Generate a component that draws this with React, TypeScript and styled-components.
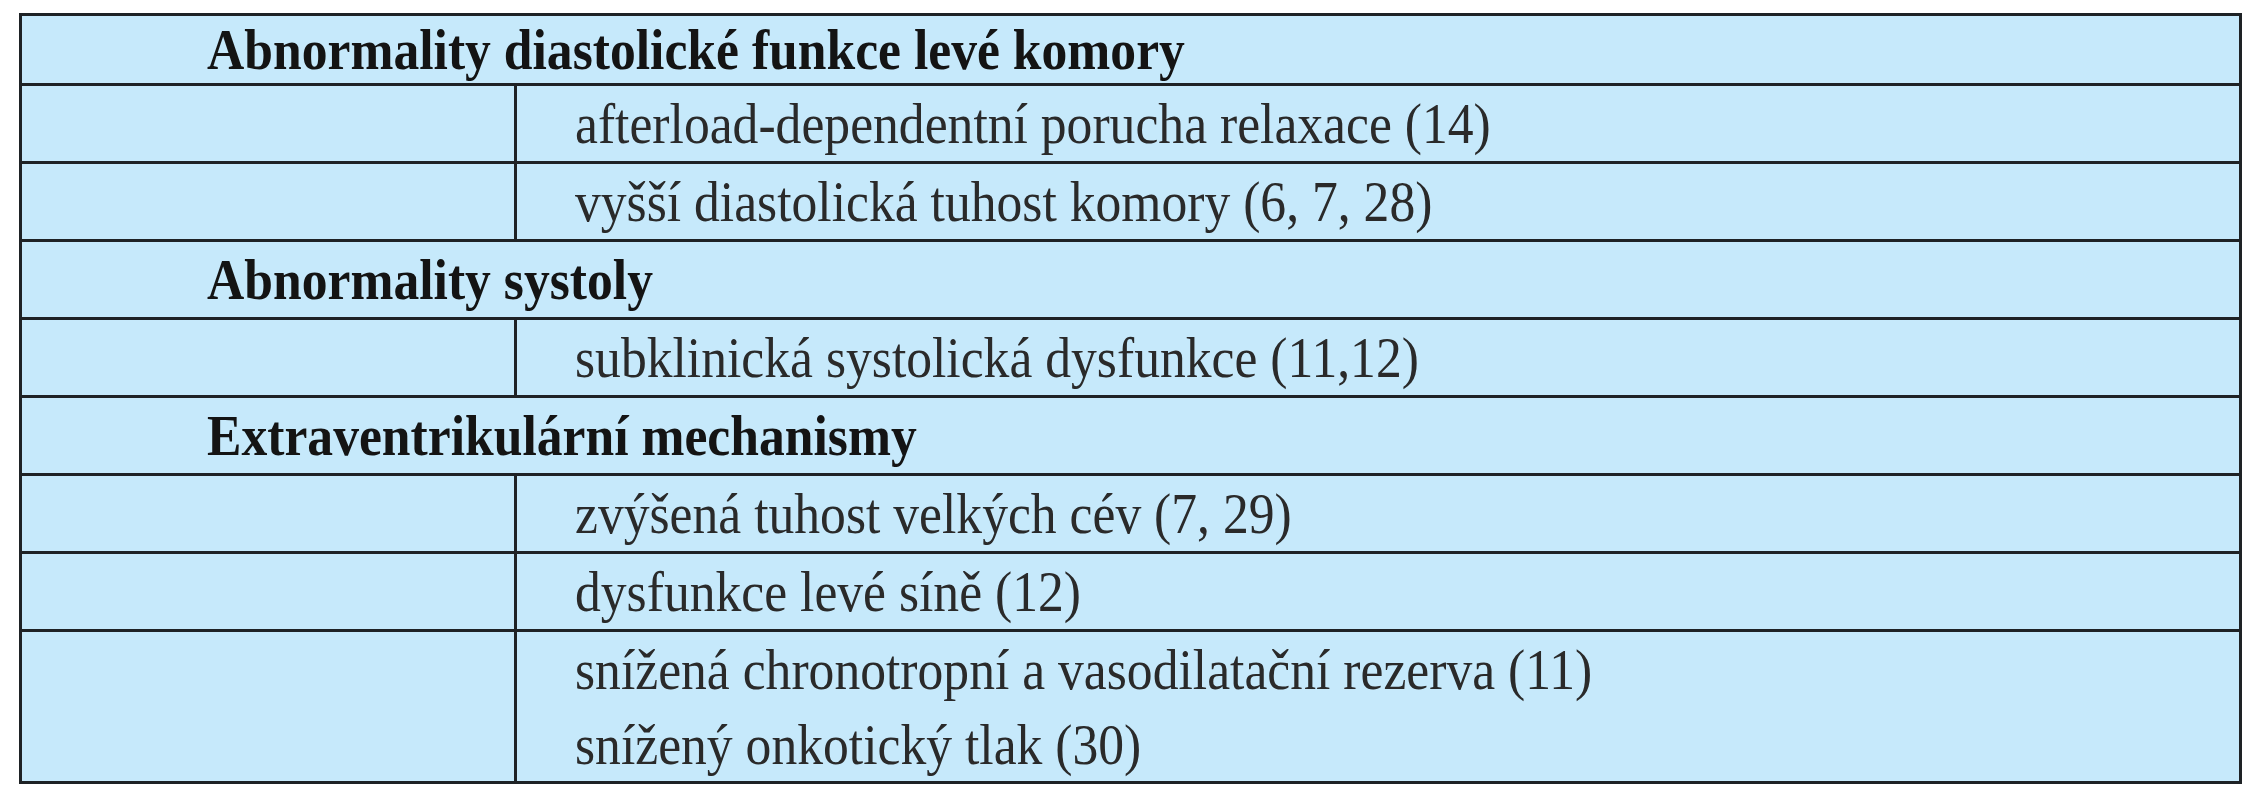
import React from "react";
import styled, { createGlobalStyle } from "styled-components";

const Global = createGlobalStyle`
  html, body {
    margin: 0;
    padding: 0;
    background: #ffffff;
  }
  body {
    font-family: "Liberation Serif", "Times New Roman", serif;
  }
`;

const Page = styled.div`
  padding: 13px 0 0 19px;
`;

const Table = styled.div`
  width: 2223px;
  box-sizing: border-box;
  border: 3px solid #1e2225;
  background: #c6e9fb;
  display: flex;
  flex-direction: column;
`;

const SectionRow = styled.div<{ $first?: boolean }>`
  height: ${(p) => (p.$first ? 67 : 75)}px;
  border-top: ${(p) => (p.$first ? "none" : "3px solid #1e2225")};
  display: flex;
  align-items: center;
  padding-left: 185px;
`;

const Title = styled.span`
  display: inline-block;
  white-space: nowrap;
  font-weight: bold;
  font-size: 58px;
  color: #141414;
  transform: scaleX(0.89);
  transform-origin: left center;
`;

const ItemRow = styled.div<{ $tall?: boolean }>`
  height: ${(p) => (p.$tall ? 149 : 75)}px;
  border-top: 3px solid #1e2225;
  display: grid;
  grid-template-columns: 492px 1fr;
`;

const Blank = styled.div``;

const Items = styled.div`
  border-left: 3px solid #1e2225;
  padding-left: 58px;
  display: flex;
  flex-direction: column;
  justify-content: center;
  line-height: 75px;
`;

const Line = styled.span`
  display: block;
  white-space: nowrap;
  font-size: 58px;
  color: #2a2a2a;
  transform: scaleX(0.89);
  transform-origin: left center;
`;

type Section = { title: string; items: string[][] };

const data: Section[] = [
  {
    title: "Abnormality diastolické funkce levé komory",
    items: [
      ["afterload-dependentní porucha relaxace (14)"],
      ["vyšší diastolická tuhost komory (6, 7, 28)"],
    ],
  },
  {
    title: "Abnormality systoly",
    items: [["subklinická systolická dysfunkce (11,12)"]],
  },
  {
    title: "Extraventrikulární mechanismy",
    items: [
      ["zvýšená tuhost velkých cév (7, 29)"],
      ["dysfunkce levé síně (12)"],
      [
        "snížená chronotropní a vasodilatační rezerva (11)",
        "snížený onkotický tlak (30)",
      ],
    ],
  },
];

export default function App() {
  return (
    <Page>
      <Global />
      <Table>
        {data.map((s, si) => (
          <React.Fragment key={s.title}>
            <SectionRow $first={si === 0}>
              <Title>{s.title}</Title>
            </SectionRow>
            {s.items.map((lines, i) => (
              <ItemRow key={i} $tall={lines.length > 1}>
                <Blank />
                <Items>
                  {lines.map((l) => (
                    <Line key={l}>{l}</Line>
                  ))}
                </Items>
              </ItemRow>
            ))}
          </React.Fragment>
        ))}
      </Table>
    </Page>
  );
}
